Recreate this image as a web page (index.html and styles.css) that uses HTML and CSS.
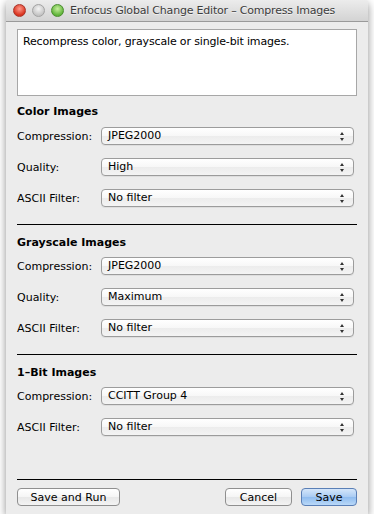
FILE: index.html
```html
<!DOCTYPE html>
<html lang="en">

<head>
    <meta charset="UTF-8">
    <title>Compress Images</title>
    <link rel="stylesheet" href="styles.css">
</head>

<body>
    <div class="window">
        <div class="titlebar">
            <div class="lights">
                <span class="light red"></span>
                <span class="light gray"></span>
                <span class="light green"></span>
            </div>
            <div class="title">Enfocus Global Change Editor – Compress Images</div>
        </div>

        <div class="content">
            <div class="description">Recompress color, grayscale or single-bit images.</div>

            <!-- Color images -->
            <div class="section">
                <h2>Color Images</h2>
                <div class="row">
                    <span class="label">Compression:</span>
                    <div class="popup">JPEG2000<span class="arrows"></span></div>
                </div>
                <div class="row">
                    <span class="label">Quality:</span>
                    <div class="popup">High<span class="arrows"></span></div>
                </div>
                <div class="row">
                    <span class="label">ASCII Filter:</span>
                    <div class="popup">No filter<span class="arrows"></span></div>
                </div>
            </div>

            <div class="divider"></div>

            <!-- Grayscale images -->
            <div class="section">
                <h2>Grayscale Images</h2>
                <div class="row">
                    <span class="label">Compression:</span>
                    <div class="popup">JPEG2000<span class="arrows"></span></div>
                </div>
                <div class="row">
                    <span class="label">Quality:</span>
                    <div class="popup">Maximum<span class="arrows"></span></div>
                </div>
                <div class="row">
                    <span class="label">ASCII Filter:</span>
                    <div class="popup">No filter<span class="arrows"></span></div>
                </div>
            </div>

            <div class="divider"></div>

            <!-- 1-bit images -->
            <div class="section">
                <h2>1–Bit Images</h2>
                <div class="row">
                    <span class="label">Compression:</span>
                    <div class="popup">CCITT Group 4<span class="arrows"></span></div>
                </div>
                <div class="row">
                    <span class="label">ASCII Filter:</span>
                    <div class="popup">No filter<span class="arrows"></span></div>
                </div>
            </div>

            <div class="spacer"></div>
            <div class="divider bottom"></div>

            <div class="buttons">
                <button class="btn run">Save and Run</button>
                <div class="right-buttons">
                    <button class="btn cancel">Cancel</button>
                    <button class="btn save">Save</button>
                </div>
            </div>
        </div>
    </div>
</body>

</html>
```
FILE: styles.css
```css
body {
    margin: 0;
    background: #ffffff;
    font-family: "DejaVu Sans", sans-serif;
    font-size: 11px;
    color: #000;
}

.window {
    width: 362px;
    height: 514px;
    margin-left: 6px;
    background: #ececec;
    border-radius: 4px 4px 0 0;
    box-shadow: 0 3px 9px rgba(0, 0, 0, 0.45);
    display: flex;
    flex-direction: column;
    overflow: hidden;
}

.titlebar {
    height: 22px;
    flex-shrink: 0;
    display: flex;
    align-items: center;
    background: linear-gradient(#ececec, #d3d3d3);
    border-bottom: 1px solid #9a9a9a;
    box-sizing: border-box;
}

.lights {
    display: flex;
    gap: 6px;
    padding-left: 7px;
}

.light {
    width: 13px;
    height: 13px;
    border-radius: 50%;
    box-sizing: border-box;
}

.red {
    background: radial-gradient(circle at 50% 35%, #ff9a8c, #d8321d 70%);
    border: 1px solid #a8342a;
}

.gray {
    background: radial-gradient(circle at 50% 35%, #f4f4f4, #c4c4c4 70%);
    border: 1px solid #a2a2a2;
}

.green {
    background: radial-gradient(circle at 50% 35%, #c6ef9c, #5fb43a 70%);
    border: 1px solid #4a8c2f;
}

.title {
    margin-left: 6px;
    font-size: 11px;
    letter-spacing: -0.2px;
    white-space: nowrap;
    color: #3c3c3c;
    text-shadow: 0 1px 0 rgba(255, 255, 255, 0.6);
}

.content {
    flex: 1;
    display: flex;
    flex-direction: column;
    padding: 7px 11px 8px 11px;
}

.description {
    height: 67px;
    flex-shrink: 0;
    background: #fff;
    border: 1px solid #a7a7a7;
    padding: 5px 5px;
    box-sizing: border-box;
    letter-spacing: -0.15px;
}

.section h2 {
    font-size: 11px;
    line-height: 14px;
    font-weight: bold;
    margin: 9px 0 8px 0;
}

.divider + .section h2 {
    margin-top: 11px;
    margin-bottom: 7px;
}

.row {
    display: flex;
    align-items: center;
    height: 18px;
    margin-bottom: 13px;
}

.row:last-child {
    margin-bottom: 0;
}

.label {
    width: 84px;
    flex-shrink: 0;
}

.popup {
    position: relative;
    flex: 1;
    height: 18px;
    margin-right: 3px;
    line-height: 16px;
    padding-left: 6px;
    box-sizing: border-box;
    border: 1px solid #9c9c9c;
    border-radius: 4px;
    background: linear-gradient(#ffffff, #f7f7f7 50%, #ececec 51%, #f4f4f4);
    box-shadow: 0 1px 0 rgba(0, 0, 0, 0.06);
}

/* stepper arrows of the popup */
.arrows {
    position: absolute;
    right: 8px;
    top: 4px;
    width: 5px;
    height: 9px;
}

.arrows::before,
.arrows::after {
    content: "";
    position: absolute;
    left: 0;
    border-left: 2.5px solid transparent;
    border-right: 2.5px solid transparent;
}

.arrows::before {
    top: 0;
    border-bottom: 3px solid #333;
}

.arrows::after {
    bottom: 0;
    border-top: 3px solid #333;
}

.divider {
    height: 1px;
    flex-shrink: 0;
    background: #000;
    margin-top: 17px;
}

.divider.bottom {
    margin-top: 0;
    margin-bottom: 8px;
}

.spacer {
    flex: 1;
}

.buttons {
    display: flex;
    justify-content: space-between;
}

.right-buttons {
    display: flex;
    gap: 9px;
}

.btn {
    font-family: "DejaVu Sans", sans-serif;
    font-size: 11px;
    height: 18px;
    padding: 0;
    border: 1px solid #8f8f8f;
    border-radius: 4px;
    background: linear-gradient(#ffffff, #f5f5f5 50%, #e8e8e8 51%, #f3f3f3);
    color: #000;
}

.run {
    width: 103px;
}

.cancel {
    width: 67px;
}

.save {
    width: 56px;
    border-color: #5a7fb6;
    background: linear-gradient(#d5e6fa, #a9cbf3 50%, #8fbcef 51%, #b9d8f8);
}
```
